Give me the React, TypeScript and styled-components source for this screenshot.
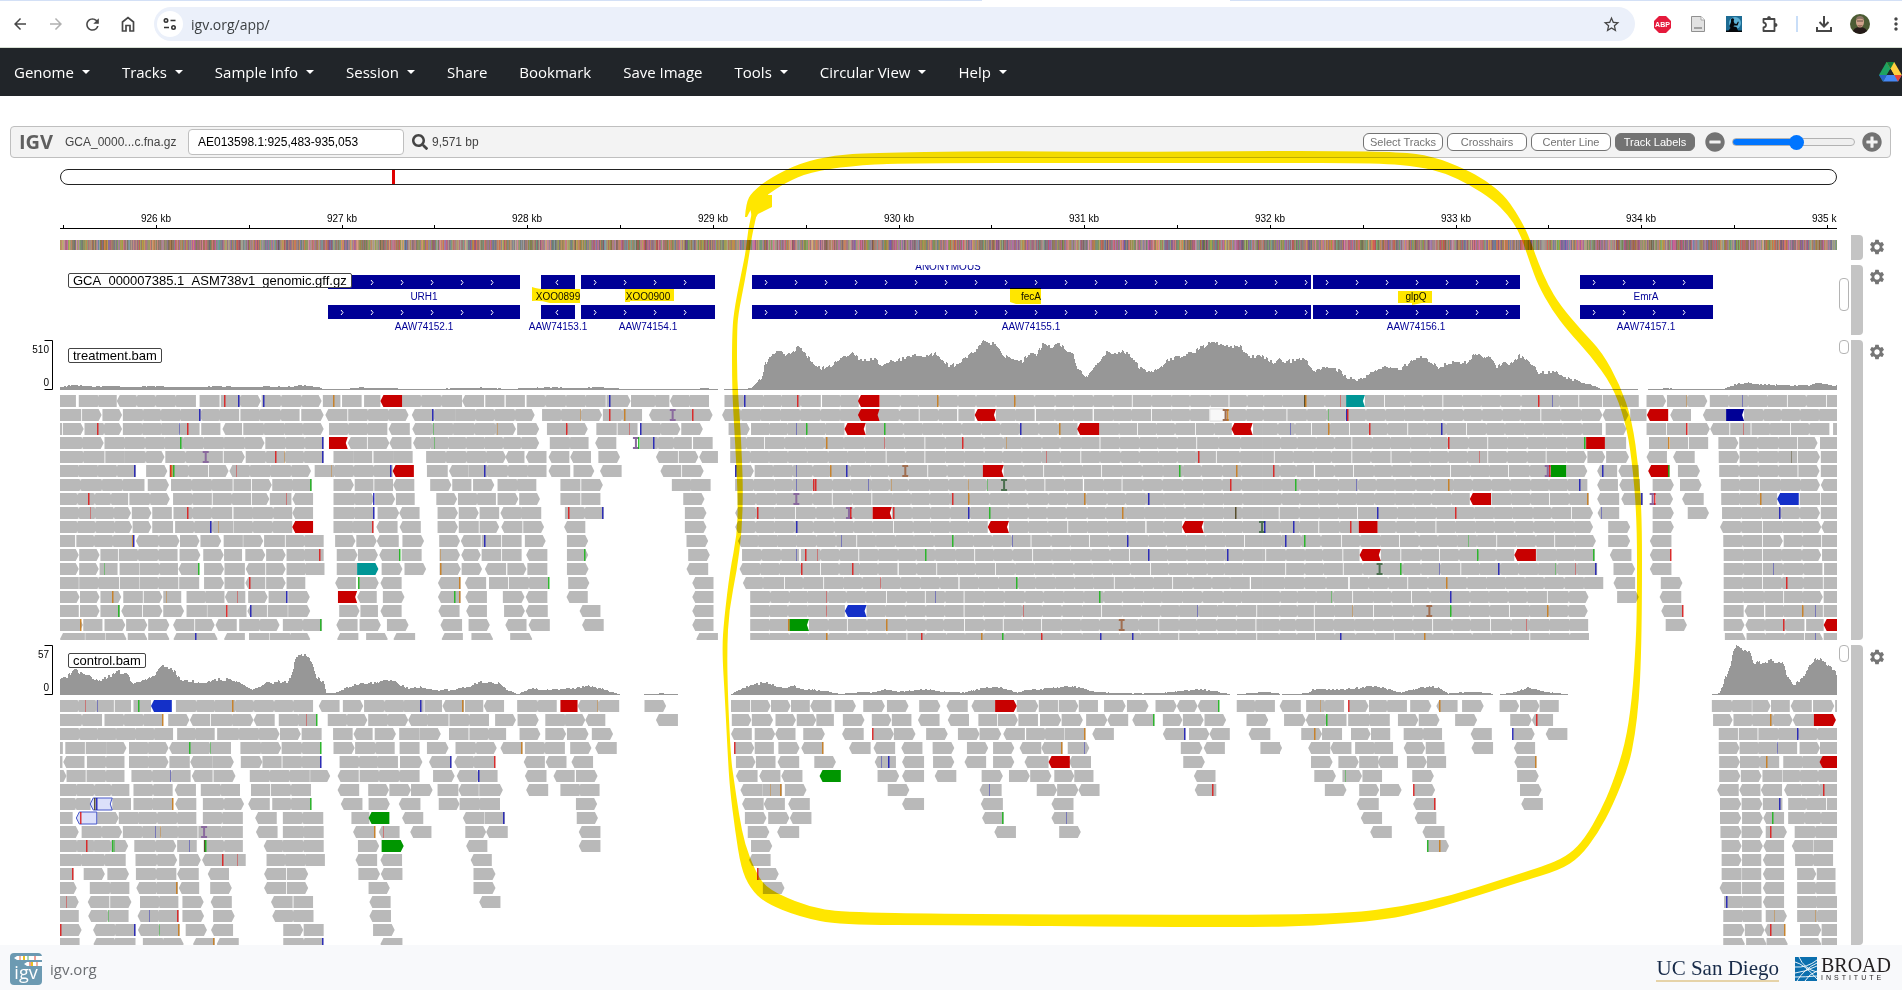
import React from 'react';
import styled, { createGlobalStyle } from 'styled-components';
import {
  MdArrowBack,
  MdArrowForward,
  MdMoreVert,
  MdRefresh,
  MdSettings,
  MdStarBorder,
} from 'react-icons/md';
import { FaMinusCircle, FaPlusCircle, FaSearch } from 'react-icons/fa';

/* ------------------------------------------------------------------ */
/* Alignment data                                                      */
/*                                                                     */
/* Each tile holds packed rows. A token is either a read run           */
/* ("<286-480", "541-639>", optional colour letter in front, ">" for a */
/* forward tip, "n" for a notched end) or a base mark ("r551", upper   */
/* case when low quality).                                             */
/* ------------------------------------------------------------------ */

const UNITS_PER_PX = 2.45;
const VIEW_LEFT = 60;

interface Tile {
  origin: number;
  rows: string[];
}

const treatmentTiles: Tile[] = [
  {
    origin: 0,
    rows: [
      '147-186 193-286 <286-480 489-538 541-639> 641-788> 791-834 838-886 892-932 985-1132 <1132-1186 1189-1236 1239-1286 1290-1484 1486-1545> 1546-1568 r<932-985 r551 b585 b648 o818 b1495',
      '147-199 201-249> 251-299> 301-586 589-734 738-793> <797-851 853-1001> <1009-1115 1115-1310> 1328-1475> 1477-1568 b489 b1060 O1423 r1494 o1532',
      '147-152 154-205> 207-299> 301-489 493-540 <545-593 596-793> 806-949 <952-1004 <1010-1264> 1267-1321> 1340-1440> 1461-1511 1513-1562 r240 r460 B442 r1389 O1220 G1064 R1544',
      '147-254> 256-648> 650-793 <852-899 901-954> <954-1008 <1012-1321> 1347-1442 <1458-1510 r806-852n g444 b791 G1065 i1558 g1566',
      '147-256 258-306 306-403> 405-546 548-600> 602-793 817-867 867-912 915-963 963-1011 1044-1240> <1238-1285 <1288-1339 <1344-1395 <1397-1448 1466-1519> i504 r677 O699 b791',
      '147-333 358-410> 415-510 512-560> <562-762> 771-962 1046-1097 <1100-1148 1148-1339 <1344-1397 1405-1456> <1470-1523 b331 r418 o422 g426 b959 b1189 r<962-1014 R580 O814',
      '147-354 362-414> 419-570 572-615 617-666> 667-764 817-867> 869-915 917-963 <963-1015 1054-1106> 1108-1155 1159-1211> 1219-1314 1373-1422 1424-1477> g763',
      '147-314 317-416> 424-519 521-615 617-660> 661-714 <716-767 817-917> 919-968> 970-1016 1069-1120> 1122-1215 1219-1270> 1272-1323> 1373-1422 1424-1471 r218 R702 b916',
      '147-321> 323-371> 373-421 425-569 572-716 <716-767 817-917 925-978> <978-1028 1072-1122> 1124-1173> 1175-1223 <1226-1326 1384-1479 r460 R223 b916 r1395 b1477',
      '147-324> 325-371> 373-424 429-571 572-716 817-915 <922-974 <979-1031 1072-1122> 1124-1173 1175-1223> <1228-1280 1282-1333> <1382-1434 b516 O536 r915 r<716-767',
      '147-184 187-324 <333-440> 441-489> 491-542> 548-595 596-645> 647-698 700-793 821-871> 873-923> <923-977 986-1039> 1076-1127> <1129-1178 1180-1228 1230-1278 1286-1337> 1389-1441> o325 b329 b1189',
      '147-193> 194-244> 246-289 291-435 440-491> 498-548> 549-593 601-650> 652-700> 702-793 825-876> 877-926> <929-980 984-1033 1077-1127> <1130-1178> 1180-1228 1230-1278 <1289-1341 1389-1441> r783 g979 O1080 g1434',
      '147-193> 194-242> 244-288 293-342 343-436 <437-488 500-549> 550-600 <602-650 652-700> 702-795 825-875 935-986> 991-1044> 1077-1129> 1131-1181> <1188-1240 1243-1290> 1292-1341 1389-1442> t875-927> G258 g487 o1080',
      '147-193 194-292 294-342 343-437 439-488 500-549> 550-599 <601-650 652-700> 702-748 <821-872 877-928> <932-984 <1073-1128 <1139-1191 1198-1245 1247-1344 1392-1444> r612 g880 o1126 g1344',
      '147-195> 196-244> 246-297> 302-350 352-398> 400-444 457-550 <551-601 608-656> 658-704 706-759> <875-923 938-991> <1073-1128 <1140-1193 1232-1285> <1288-1341 <1388-1440 r828-875n o277 O409 R583 b703 g1114 o1126',
      '147-193 196-244> 246-294 <297-348 350-398> 400-451> 457-507 508-555 557-604 <606-654 656-705 706-760> 831-881> 883-926 <932-984 <1074-1126 <1142-1193 1235-1286> <1288-1342 <1420-1471 g291 r557 b614',
      '147-203> 204-251 256-307> 309-361> 363-415> <424-476 478-526> <528-580 586-685> 693-789 <824-876 881-933> 948-1001> <1079-1132 1148-1200> <1238-1290 <1295-1347 <1426-1479 o199 g787',
      '<147-208 209-258 259-310> 313-361> 363-415> <425-478 478-533> <549-600 610-660 661-760> <826-878 897-950> <964-1017 <1082-1134 1155-1208> 1250-1304> b479',
    ],
  },
  {
    origin: 1568,
    rows: [
      '0-72 <73-169 207-443 446-536 588-1205 1207-1442 1444-1568 r<534-587 b257 r388 o729 o919',
      '0-5 <22-178> <201-683 685-777 780-820 872-967 970-1109 1112-1252 1254-1395 1442-1568 587-680 i80 r129 r<534-587n r<820-872n w1396-1432 q1435 o1440',
      '0-99> 101-154> 217-269> 272-501 553-1072 1125-1218 1220-1360 1362-1450 1502-1524 b2 B384 g410 g601 b933 o1028 r<501-553n r<1071-1125 r<1449-1501n',
      '0-127 130-178 221-304 306-697 699-1126 1128-1363 1365-1524 b35 o459 r792 R601 O899',
      '<39-93 95-143> <145-191 221-602 604-697 699-1079 1081-1411 1413-1524 r1369 R998',
      '<50-101 103-156> 233-279> 281-704 706-840 891-988 990-1130 1132-1524 r840-891n b234 B384 o469 b506 q650 g1322 o1463',
      '78-173 233-991 993-1085 1088-1180 1182-1524 r427 r431 B562 O618 O805 G853 j892 r1447 B384',
      '106-158> 239-470 472-567 569-1524 i383 r766 o805 o1090 b1247',
      '110-163> <233-380 382-570 617-1524 r290 i512 r517 r570-617n r623 b805 g858 o1184 k1461',
      '110-163> <233-620 622-852 904-1047 1049-1238 1241-1328 1381-1524 b384 r<852-904n r<1328-1381n j1524',
      '114-167> <240-530 532-957 959-1100 1102-1480 1482-1524 g766 b1195 B495 B915',
      '118-171> 250-390 394-535 537-819 821-961 963-1198 1200-1524 r406 R437 g700 b1248 b1440 B384',
      '<114-167 <244-441 443-631 634-726 728-870 872-1250 1252-1524 r396 r523',
      '<128-180 <252-353 355-449 451-780 783-1161 1163-1304 1306-1494 1497-1524 g924 R591',
      '<128-180 270-603 605-698 700-793 795-1524 g1127 R459 B726',
      '<128-180 270-502 555-793 795-1130 1132-1510 1512-1524 b<502-555n R459 B1366 R940',
      '<128-180 270-366 414-507 509-794 796-889 891-983 985-1270 1272-1508 1510-1524 g366-414n o364 o604 q1180',
      '<138-191 270-653 655-1319 1321-1510 1512-1524 o459 r691 o837 g890 r984 b1130 b1208',
    ],
  },
  {
    origin: 3092,
    rows: [
      '0-206 252-299 301-442 444-775 777-833 835-923 942-990> 992-1091> 1097-1286 1288-1382 1384-1409 k105 o108 R193 t206-252n r679 B714 B1178 O1042',
      '0-60 62-682 684-834> <834-898> 902-942 <1000-1051 <1080-1137 1181-1409 b208 r211 r<943-995 v1137-1181n G163',
      '0-120 122-213 215-356 358-500 502-833 842-893> 942-990 992-1042 1044-1097> <1098-1145 1147-1197 1199-1294 1296-1390 1399-1409 B72 o165 r264 b440 r1042 R1180',
      '0-219 221-552 554-794 840-892 948-996 999-1044 1046-1093 1118-1167> 1169-1311 1313-1361> 1367-1409 r794-840 r457 g791 o997',
      '0-29 31-219 221-315 317-552 554-695 697-796> 797-841> 843-899> <942-992 <1007-1060 1119-1170> 1170-1311 1313-1367> 1369-1409 K1299 R533',
      '0-127 130-223 225-461 463-603 605-708 745-797> <821-870 <873-923 1019-1073> 1120-1312 1314-1366> 1369-1409 r30 i700 r706 g708-745 b836 r<946-998 g998',
      '0-797 <821-872 <875-926 957-1009> 1024-1077> 1124-1218 1220-1367> <1369-1409 g82 B232 o458 b779',
      '0-509 562-703 705-800 <821-875 <880-933 965-1007> <1029-1082 1125-1262 1317-1367 1369-1409 r<509-561 o799 b932 i957 r963 o1222 b<1262-1315',
      '0-41 43-233 235-757 759-811> <822-875 957-1009> 1043-1095> 1127-1367> 1369-1409 b284 r475 B833 b1270',
      '0-138 140-237 283-425 427-811> 848-902> 957-1009> <1122-1225 1227-1370> <1370-1409 r237-283 b8 b79 r218',
      '0-194 196-336 338-574 576-716 718-818> 848-902> <950-1003 1130-1225 1227-1276> 1278-1370 1372-1409 b58 g105 G507',
      '0-8 10-197 199-239 291-339 341-434 436-618 672-815 <852-905 <950-1002 1131-1225 1227-1370> 1372-1409 r<239-291n g529 r<618-671 g813 r1001',
      '0-57 59-198 200-486 488-821 861-914> <950-1003 1131-1225 1227-1373 1377-1409 j288 g340 B436 b580 G721 R770 b819 B1254',
      '0-211 215-356 358-836 <861-914 977-1030> 1131-1225 1227-1374 1376-1409 o453 r1286',
      '0-221 223-365 367-698 700-800> 870-923> <974-1027 1131-1277 1279-1374> 1376-1409 G172 b463',
      '0-127 129-272 274-605 607-798> <978-1031 1131-1180 <1182-1230 1233-1374 1376-1409 q410 g463 o700 O223 r1031 o1326 B1358',
      '0-127 129-417 419-559 561-799 989-1041> 1131-1182> <1184-1329 1333-1376 R650 r1280 r<1376-1409',
      '0-130 132-323 325-655 657-801 1134-1185> 1187-1328 1330-1374> 1376-1409 b193 o400 B1358',
    ],
  },
];

const controlTiles: Tile[] = [
  {
    origin: 0,
    rows: [
      '147-279 281-321 327-370 431-767 <781-832 840-890> 892-1038 1040-1083 <1084-1137 1139-1184 <1185-1235 1267-1364 <1415-1517 R210 B241 g341 o572 b1032 o1134 b<370-421 r1373-1415 O1466',
      '147-250 256-399 412-464> <465-515 517-621> <621-673 683-776 803-900> 902-1000> <1000-1099 1101-1198 1213-1264> 1268-1320> 1336-1434> <1434-1483 o399 R753 g777',
      '147-424 434-526 532-685> 686-737> 739-788 816-864 <866-913 918-970> 978-1028 1028-1080> 1100-1148 1150-1240 1273-1324> 1336-1387> 1389-1442> 1450-1502>',
      '147-154 160-208 210-260 260-310> 316-413> <414-566 589-689> 690-787 817-869> 870-967 979-1028 1046-1099> 1116-1217> <1226-1280 1286-1384 1397-1449> <1458-1511 g465 G518 g787 o1280',
      '147-153 <155-207 213-305 316-413> 415-465 <466-520 520-573> 590-643> 643-690 692-787 832-975 980-1035> <1051-1106 <1113-1213 <1283-1335 <1337-1388 <1400-1453 b787 b1105 r1213',
      '147-163> 163-210 212-305 322-467 <470-521 523-577> 612-759 760-809> <827-879 881-1028 1061-1114> <1119-1219 <1286-1339 <1356-1408 1411-1464> B419 b1173',
      '147-317 327-423 <428-480 492-588 615-662 664-762 <827-880 902-953> 954-1007> 1007-1060> 1072-1123 <1123-1173 1174-1232> <1289-1343 1373-1469',
      '147-222 275-321 327-424 <429-481 497-598> <608-661 667-763 <835-888 903-955> <977-1030 1075-1126> 1126-1225 1411-1463> o423 g762 l<221-275n k233 b238',
      '147-178 238-291> 291-481 497-595 <625-678 693-792 861-905 <985-1037 <1134-1186 1187-1237 1413-1465> b1236 l<187-237 r199 g<903-954',
      '147-193> 200-299> 301-484 486-595 <627-680 693-793 <865-919 <928-979 <1005-1057 1140-1191> <1191-1244 <1418-1471 B381 O395 i500 o918 R941',
      '147-314> 329-432> 434-482 499-595 <646-793 877-929> <1142-1194 <1418-1471 r214 g277 G282 B466 k502 g505 g935-989>',
      '147-308 332-434> 439-492> <495-549 549-602 653-796 <871-924 <932-985 <1153-1205 r547 R583',
      '147-180 205-257> 263-316> 333-432 <434-487 <509-561 <647-701 703-755> 878-931> <933-986 1160-1214> r180',
      '147-188> 220-317 <334-436 <438-488 515-568> <647-701 703-755> 903-955> 1160-1214> o434',
      '147-193> <215-268 270-322> 343-437 447-499> <516-568 <664-717 719-767 <905-957 <1174-1226 R165',
      '147-193 <216-315 <337-438 447-500> 522-575> <667-768 <905-958 G268 B368 r437',
      '147-200> <228-332 <338-440 455-507> <517-571 694-743> 744-793 914-967> r149 b330 o438 G391',
      '147-195 <229-332 350-450> <473-526 <531-585 694-792 <932-986 o525 b791',
    ],
  },
  {
    origin: 1568,
    rows: [
      '11-64> 223-270 272-320> 321-369> 370-416 <417-469 477-529> 547-600> 605-658> 684-736> <751-803 <812-870 923-976> 977-1024 1026-1074> 1075-1122 1137-1190> 1193-1246> 1263-1315> <1315-1366> <1366-1418 1462-1555 r870-923> g1418',
      '<39-93 225-273> 274-326> 332-382> 384-432> 432-475 497-550> 568-616> 617-665 <681-734 <754-806 829-875 877-926> 927-975 980-1032> 1033-1085> 1093-1145> <1145-1196 <1206-1260 1281-1329> 1330-1381> 1383-1436> 1486-1538> g1260',
      '<223-274 281-331> <331-381 400-453> <495-548 570-622> 622-675> 701-754> 779-832> 832-885> <890-943 946-1040 1041-1091 <1108-1161 <1281-1336 1345-1395> <1395-1445 <1491-1544 r572 o1090 b1335',
      '231-280> 281-328 339-391> <395-449 <512-565 <572-625 <640-692 717-770> 801-853> 865-917> <930-983 <983-1035 1048-1101> 1325-1378> <1381-1433 1520-1568 r233 o448 o1034 B1090',
      '235-283> 284-332 <337-390 427-480> <575-627 <642-696 718-770> <795-848 865-917> <942-1001 <1051-1105 1331-1384> B594 b609 r<1001-1053',
      '<235-288 <292-344 <346-398 582-635> <642-696 <722-775 837-889> 904-955> 956-1008> 1015-1064> 1064-1111 <1357-1410 g<440-492',
      '<246-300 300-348 355-408> 607-660> <832-886 972-1022> 1022-1074> <1074-1126 <1359-1412 O320 o346 B858 r1405',
      '<250-303 <303-355 <363-416 <642-696 <835-889 <1008-1062',
      '257-310> 314-366> <367-420 <838-891 <1008-1062 g890 B1046',
      '264-317> <336-390 <868-921 1027-1080>',
      '272-324>',
      '<267-320',
      '287-340> r288',
      '301-354>',
    ],
  },
  {
    origin: 3092,
    rows: [
      '0-31 <43-95 108-201 213-261> 262-355 363-415> <427-479 490-543> 582-630> 632-680> 680-727 1102-1200 1201-1246> 1247-1293 <1295-1347 1350-1402> 1404-1409 O145 r214 o435',
      '0-15> 54-107> <107-207 211-313 333-383> 384-435> 473-527> 608-661> <661-713 1105-1153> 1155-1300> <1300-1352 g158 r673 o1247 r1352-1406>',
      '0-20 96-147> 147-196 218-266> 267-314 347-441 <511-563 615-668> <695-748 1119-1166 1168-1214 1216-1409 o129 b616 b1312',
      '0-49> <113-167 <167-219 228-321 <347-400> 401-447 <513-566 <617-669 1119-1170> 1170-1311 1317-1367> 1367-1409 B1263',
      '120-173> 187-237> 238-285 <283-333 355-404> 404-451 <618-672 1120-1171> 1171-1267 1277-1372 o672 o1236 r<1366-1409',
      '128-181> 197-245> 246-294 368-421> 625-678> 1120-1172> 1173-1224> 1226-1275 1276-1409 G205',
      '154-207> 238-287> 289-342> 372-424> 632-685> <1115-1168 <1169-1221 <1222-1274 <1279-1409 r373 r1378',
      '<232-286 <370-425 <635-688 1122-1174> 1175-1226> 1227-1275 1289-1382 1384-1409 r423 b1268',
      '<242-294 <374-427 1122-1174> 1176-1227> <1228-1279 1289-1409 g1253',
      '<265-318 <393-447 1123-1175> 1175-1227> 1234-1286> 1305-1409 r1246',
      '404-458> 1126-1175> 1176-1227> <1228-1279 <1298-1351 1352-1399 g406 o436',
      '1126-1175> 1176-1223 <1227-1279 1306-1399',
      '1126-1175 1176-1223 <1227-1279 1311-1358> 1359-1405',
      '<1121-1174 1176-1223 <1227-1279 1311-1405',
      '1132-1224 <1227-1279 1311-1409 b1138',
      '1130-1224 1234-1286> 1311-1409 O1256 O1358',
      '1130-1182> 1183-1231> <1231-1281 1318-1370> 1371-1409 r1246 o1281',
      '1130-1183> 1186-1236> 1236-1288> 1318-1370> 1371-1409',
    ],
  },
];

/* Coverage islands as "position,depth" pairs; depth is a third of a pixel. */
interface Island {
  origin: number;
  points: string;
}

const treatmentCoverage: Island[] = [
  {
    origin: 0,
    points:
      '147,8 175,15 225,10 270,12 310,9 370,12 430,9 500,10 540,12 590,8 650,11 700,9 740,14 770,11 795,2 850,4 880,8 960,5 1010,3 1060,2 1120,6 1190,7 1240,3 1360,9 1400,5 1460,9 1500,5 1568,2 1678,3 1728,5 1758,2',
  },
  {
    origin: 1568,
    points:
      '207,3 240,2 270,5 285,20 298,40 305,75 320,105 345,118 355,98 370,112 385,128 400,118 410,100 430,72 445,64 470,72 490,95 517,112 530,98 555,90 575,92 590,72 610,85 640,92 665,102 700,105 725,108 755,72 780,78 800,100 825,120 840,147 870,135 890,105 910,88 935,85 950,108 970,108 985,135 1010,130 1025,142 1045,120 1060,110 1070,70 1095,37 1115,70 1140,112 1160,108 1180,118 1200,105 1220,72 1240,52 1270,60 1290,92 1320,100 1360,118 1400,144 1430,132 1470,130 1490,100 1520,102 1555,80 1568,92 1580,84 1602,90 1624,95 1644,70 1654,58 1674,68 1714,60 1724,42 1754,30 1784,45 1814,67 1864,65 1894,92 1914,100 1934,85 1954,67 1984,82 2024,82 2046,112 2069,98 2079,98 2099,68 2114,80 2129,75 2154,104 2184,80 2199,52 2244,52 2274,35 2304,25 2354,4 2369,2 2444,4',
  },
  {
    origin: 3092,
    points: '945,2 990,5 1040,3 1130,3 1160,18 1190,22 1220,17 1280,14 1340,14 1360,20 1409,12',
  },
];

const controlCoverage: Island[] = [
  {
    origin: 0,
    points:
      '147,47 170,60 178,77 195,65 220,53 240,43 270,57 285,70 310,63 325,35 350,45 385,67 395,87 420,80 440,47 480,40 495,35 520,45 560,47 590,33 615,15 650,35 680,40 705,37 716,75 725,112 738,120 750,123 765,95 775,50 793,40 798,5 820,7 850,23 880,33 920,37 945,47 970,37 1000,20 1030,23 1060,15 1110,15 1150,27 1170,37 1220,35 1240,17 1268,2 1300,20 1330,15 1400,20 1440,28 1470,20 1518,1',
  },
  { origin: 1568, points: '11,2 50,5 94,2' },
  {
    origin: 1568,
    points:
      '223,2 245,17 270,30 305,37 330,27 350,22 375,27 400,17 450,13 490,3 550,10 570,7 600,17 630,10 670,13 700,17 740,10 790,7 820,15 850,23 885,23 925,7 940,13 1000,20 1050,27 1080,20 1110,10 1180,5 1270,5 1330,13 1370,17 1400,13 1445,2',
  },
  { origin: 1568, points: '1462,2 1530,10 1568,4' },
  {
    origin: 3092,
    points:
      '50,2 110,5 125,17 200,17 280,27 340,7 380,20 410,28 440,17 455,5 520,10 567,3',
  },
  { origin: 3092, points: '583,2 615,7 650,22 690,10 750,2' },
  {
    origin: 3092,
    points:
      '1102,3 1120,5 1135,55 1145,85 1157,147 1175,137 1195,125 1205,93 1240,103 1275,95 1285,55 1300,30 1320,45 1340,90 1360,110 1380,97 1400,75 1409,55',
  },
];

const markColors: Record<string, string> = {
  r: '#dc1414',
  b: '#1414b4',
  g: '#14b414',
  o: '#c87814',
  k: '#463c14',
};
const insertColors: Record<string, string> = { i: '#8a6a9e', j: '#4c7050', q: '#a06e50' };
const readColors: Record<string, string> = {
  r: '#c80000',
  g: '#009600',
  b: '#1430c8',
  v: '#000096',
  t: '#009696',
  w: '#f8f8f8',
  l: '#dce0fa',
};
const readOutlines: Record<string, string> = { l: '#4656c8', w: '#dcdcdc' };

const noise = (n: number) => {
  const s = Math.sin(n * 127.1 + 11.7) * 43758.5453;
  return s - Math.floor(s);
};

const toPx = (origin: number, unit: number) => (origin + unit) / UNITS_PER_PX - VIEW_LEFT;

/* ------------------------------------------------------------------ */
/* Styles                                                              */
/* ------------------------------------------------------------------ */

const GlobalStyle = createGlobalStyle`
  *, *::before, *::after { box-sizing: border-box; }
  body { margin: 0; background: #fff; }
  button, input { font: inherit; color: inherit; margin: 0; }
`;

const sans = '"Liberation Sans", Arial, sans-serif';
const ui = '"Open Sans", "Segoe UI", sans-serif';

const Page = styled.div`
  position: relative;
  display: flex;
  flex-direction: column;
  min-height: 100vh;
  overflow: hidden;
  font-family: ${sans};
  font-size: 12px;
  color: #000;
`;

const TabStrip = styled.div`
  display: flex;
  height: 1px;
  background: #d3e0f6;
  justify-content: center;
`;

const ActiveTabEdge = styled.div`
  width: 13%;
  margin-left: 310px;
  background: #fff;
`;

const BrowserBar = styled.header`
  display: flex;
  align-items: center;
  height: 47px;
  padding-left: 2px;
  border-bottom: 1px solid #d8e0d4;
  font-family: ${ui};
  color: #474747;
`;

const IconButton = styled.button<{ $muted?: boolean }>`
  display: flex;
  flex: none;
  align-items: center;
  justify-content: center;
  width: 36px;
  height: 36px;
  padding: 0;
  border: 0;
  background: none;
  color: ${(p) => (p.$muted ? '#b0b0b0' : '#474747')};
`;

const AddressPill = styled.div`
  display: flex;
  flex: 1;
  align-items: center;
  height: 34px;
  margin: 0 9px 0 8px;
  padding: 0 6px 0 3px;
  border-radius: 17px;
  background: #ebf0fa;
`;

const SiteInfo = styled.button`
  display: flex;
  align-items: center;
  justify-content: center;
  width: 26px;
  height: 26px;
  padding: 0;
  border: 0;
  border-radius: 50%;
  background: #fff;
`;

const AddressInput = styled.input`
  flex: 1;
  min-width: 0;
  padding: 0 8px;
  border: 0;
  outline: 0;
  background: none;
  font-size: 14px;
  color: #3c4043;
`;

const Extensions = styled.div`
  display: flex;
  flex: none;
  align-items: center;
  width: 258px;
  overflow: hidden;
`;

const Divider = styled.span`
  flex: none;
  width: 2px;
  height: 16px;
  margin: 0 8px;
  background: #c9def8;
`;

const NavBar = styled.nav`
  display: flex;
  align-items: center;
  gap: 32px;
  height: 48px;
  padding-left: 14px;
  background: #212529;
  font-family: ${ui};
`;

const NavItem = styled.button<{ $menu?: boolean }>`
  display: flex;
  align-items: center;
  gap: 8px;
  padding: 0;
  border: 0;
  background: none;
  color: #fff;
  font-size: 15px;
  line-height: 24px;
  white-space: nowrap;

  &::after {
    display: ${(p) => (p.$menu ? 'block' : 'none')};
    content: '';
    border: 4px solid transparent;
    border-top-color: #fff;
    border-bottom: 0;
  }
`;

const DriveLink = styled.a`
  display: flex;
  margin-left: auto;
`;

const Browser = styled.main`
  flex: 1;
  padding-top: 30px;
`;

const Toolbar = styled.div`
  display: flex;
  align-items: center;
  height: 32px;
  margin: 0 11px 11px 10px;
  padding: 0 8px;
  border: 1px solid #bfbfbf;
  border-radius: 4px;
  background: #f3f3f3;
  color: #444;
`;

const Wordmark = styled.span`
  width: 46px;
  font-family: ${ui};
  font-size: 20px;
  font-weight: 700;
  line-height: 20px;
  color: #5f5f5f;
`;

const GenomeName = styled.span`
  width: 123px;
`;

const LocusInput = styled.input`
  width: 216px;
  height: 26px;
  padding: 0 9px;
  border: 1px solid #bfbfbf;
  border-radius: 4px;
  background: #fff;
  color: #000;
`;

const SearchButton = styled.button`
  display: flex;
  margin: 0 4px 0 8px;
  padding: 0;
  border: 0;
  background: none;
  color: #444;
`;

const ToolbarRight = styled.div`
  display: flex;
  align-items: center;
  gap: 4px;
  margin-left: auto;
`;

const Toggle = styled.button<{ $on?: boolean }>`
  width: 80px;
  height: 18px;
  padding: 0;
  border: 1px solid #737373;
  border-radius: 6px;
  background: ${(p) => (p.$on ? '#737373' : '#fff')};
  color: ${(p) => (p.$on ? '#fff' : '#737373')};
  font-size: 11px;
  line-height: 16px;
  text-align: center;
`;

const Zoom = styled.div`
  display: flex;
  align-items: center;
  gap: 7px;
  margin-left: 6px;
`;

const ZoomButton = styled.button`
  display: flex;
  padding: 0;
  border: 0;
  background: none;
  color: #737373;
`;

const ZoomSlider = styled.input`
  appearance: none;
  width: 123px;
  height: 8px;
  border: 1px solid #b2b2b2;
  border-radius: 4px;
  outline: 0;
  background: linear-gradient(to right, #0075ff 53%, #efefef 53%);

  &::-webkit-slider-thumb {
    appearance: none;
    width: 15px;
    height: 15px;
    border-radius: 50%;
    background: #0075ff;
  }
`;

const Row = styled.section<{ $h: number; $gap?: number }>`
  display: grid;
  grid-template-columns: 60px minmax(0, 1fr) 14px 12px 39px;
  height: ${(p) => p.$h}px;
  margin-bottom: ${(p) => p.$gap ?? 0}px;
`;

const Viewport = styled.div`
  position: relative;
  overflow: hidden;
`;

const Canvas = styled.svg`
  display: block;
  width: 100%;
  height: 100%;
`;

const Ideogram = styled.div`
  height: 16px;
  border: 1px solid #222;
  border-radius: 8px;
`;

const IdeogramMark = styled.div`
  width: 3px;
  height: 100%;
  margin-left: 331px;
  background: #e00000;
`;

const TrackLabel = styled.div`
  position: absolute;
  top: 8px;
  left: 8px;
  height: 15px;
  padding: 0 4px;
  overflow: hidden;
  border: 1px solid #444;
  border-radius: 2px;
  background: #fff;
  font-size: 13px;
  line-height: 13px;
`;

const ScrollThumb = styled.div<{ $h: number; $top: number }>`
  width: 10px;
  height: ${(p) => p.$h}px;
  margin: ${(p) => p.$top}px 2px 0;
  border: 1px solid #b4b4b4;
  border-radius: 4px;
`;

const DragHandle = styled.div`
  border-radius: 0 4px 4px 0;
  background: #c4c4c4;
`;

const GearButton = styled.button`
  align-self: start;
  display: flex;
  padding: 3px 0 0 5px;
  border: 0;
  background: none;
  color: #757575;
`;

const Footer = styled.footer`
  display: flex;
  align-items: center;
  height: 45px;
  padding: 3px 11px 0 10px;
  background: #f8f9fb;
`;

const FooterLink = styled.a`
  display: flex;
  align-items: center;
  gap: 8px;
  color: #6c6f73;
  font-family: ${ui};
  font-size: 15px;
  text-decoration: none;
`;

const Sponsors = styled.div`
  display: flex;
  align-items: center;
  gap: 16px;
  margin-left: auto;
`;

const UcsdLogo = styled.a`
  border-bottom: 2px solid #e6d3a8;
  color: #182b49;
  font-family: "Liberation Serif", serif;
  font-size: 21px;
  line-height: 24px;
  text-decoration: none;
`;

const BroadLogo = styled.a`
  display: flex;
  align-items: center;
  gap: 4px;
  color: #231f20;
  text-decoration: none;
`;

const BroadWords = styled.span`
  display: flex;
  flex-direction: column;
  font-family: "Liberation Serif", serif;
  font-size: 20px;
  line-height: 16px;
`;

const BroadSub = styled.span`
  font-family: ${sans};
  font-size: 7px;
  line-height: 9px;
  letter-spacing: 3px;
`;

const Highlighter = styled.svg`
  position: absolute;
  inset: 0;
  width: 100%;
  height: 100%;
  pointer-events: none;
  mix-blend-mode: multiply;
`;

/* ------------------------------------------------------------------ */
/* Track drawing                                                       */
/* ------------------------------------------------------------------ */

const ROW_PITCH = 14;
const READ_H = 12;

function readShape(x0: number, x1: number, y: number, left: boolean, right: string) {
  const mid = y + READ_H / 2;
  const bottom = y + READ_H;
  const l = left ? `${x0 + 3},${bottom} ${x0},${mid} ${x0 + 3},${y}` : `${x0},${bottom} ${x0},${y}`;
  let r = `${x1},${y} ${x1},${bottom}`;
  if (right === '>') r = `${x1 - 3},${y} ${x1},${mid} ${x1 - 3},${bottom}`;
  if (right === 'n') r = `${x1},${y} ${x1 - 2},${mid} ${x1},${bottom}`;
  return `${l} ${r}`;
}

function Alignments({ tiles, top }: { tiles: Tile[]; top: number }) {
  const reads: React.ReactNode[] = [];
  const marks: React.ReactNode[] = [];
  let notches = '';
  tiles.forEach((tile, t) =>
    tile.rows.forEach((row, r) => {
      const y = top + r * ROW_PITCH;
      row.split(' ').forEach((token, k) => {
        const key = `${t}-${r}-${k}`;
        const run = /^([a-z]?)(<?)(\d+)-(\d+)([>n]?)$/.exec(token);
        if (run) {
          const x0 = toPx(tile.origin, Number(run[3]));
          const x1 = toPx(tile.origin, Number(run[4]));
          const color = run[1];
          const shape = (
            <polygon
              key={key}
              points={readShape(x0, x1, y, run[2] === '<', run[5])}
              fill={color ? readColors[color] : '#b9b9b9'}
              stroke={readOutlines[color] ?? 'none'}
            />
          );
          (color ? marks : reads).push(shape);
          if (!color) {
            const count = Math.round((x1 - x0) / 19.4);
            for (let i = 1; i < count; i += 1) {
              const nx = x0 + ((x1 - x0) * i) / count + noise(i + r * 7 + x0) * 2 - 1;
              const d = 0.5 + noise(nx + r) * 0.8;
              notches += `M${nx - d} ${y}h${d * 2}l${-d} 2zM${nx - d} ${y + READ_H}h${d * 2}l${-d} -2z`;
            }
          }
          return;
        }
        const code = token[0];
        const x = toPx(tile.origin, Number(token.slice(1)));
        if (insertColors[code]) {
          marks.push(
            <path
              key={key}
              d={`M${x - 3} ${y}h6v2h-2v8h2v2h-6v-2h2v-8h-2z`}
              fill={insertColors[code]}
            />,
          );
          return;
        }
        const low = code === code.toUpperCase();
        marks.push(
          <rect
            key={key}
            x={Math.round(x) - 1}
            y={y}
            width={low ? 1 : 1.5}
            height={READ_H}
            fill={markColors[code.toLowerCase()]}
            opacity={low ? 0.4 : 0.85}
          />,
        );
      });
    }),
  );
  return (
    <g>
      {reads}
      <path d={notches} fill="#e0e0e0" />
      {marks}
    </g>
  );
}

function Coverage({ islands, base }: { islands: Island[]; base: number }) {
  const paths = islands.map((island, n) => {
    const pts = island.points.split(' ').map((p) => {
      const [u, d] = p.split(',').map(Number);
      return [toPx(island.origin, u), d / 3];
    });
    const start = Math.round(pts[0][0]);
    const end = Math.round(pts[pts.length - 1][0]);
    let d = `M${start} ${base}`;
    let s = 0;
    for (let x = start; x < end; x += 1) {
      while (s < pts.length - 2 && pts[s + 1][0] <= x) s += 1;
      const [xa, ya] = pts[s];
      const [xb, yb] = pts[s + 1];
      const f = Math.max(0, Math.min(1, (x - xa) / (xb - xa)));
      const depth = ya + (yb - ya) * f;
      const wobble = (noise(Math.floor(x / 2) + n * 31) - 0.5) * Math.min(4, depth * 0.25);
      d += `V${base - Math.max(1, Math.round(depth + wobble))}h1`;
    }
    return <path key={n} d={`${d}V${base}z`} fill="#979797" />;
  });
  return <g shapeRendering="crispEdges">{paths}</g>;
}

const Axis = ({ max }: { max: number }) => (
  <Canvas fontFamily={sans} fontSize="10">
    <path d="M44.5 .5H52.5V49.5H44.5" fill="none" stroke="#000" />
    <text x="49" y="13" textAnchor="end">
      {max}
    </text>
    <text x="49" y="46" textAnchor="end">
      0
    </text>
  </Canvas>
);

function Ruler() {
  const ticks = [];
  for (let i = 0; i <= 19; i += 1) {
    const x = Math.round(3 + i * 92.84);
    const kb = 925.5 + i * 0.5;
    ticks.push(
      <g key={i}>
        <path d={`M${x + 0.5} 40v4`} stroke="#000" />
        {Number.isInteger(kb) && (
          <text x={x} y="37" textAnchor="middle">
            {kb} kb
          </text>
        )}
      </g>,
    );
  }
  return (
    <Canvas fontFamily={sans} fontSize="10">
      {ticks}
      <path d="M0 43.5H1777" stroke="#000" />
    </Canvas>
  );
}

const channel = (i: number, seed: number, mean: number, spread: number) => {
  const fine = noise(i * 3 + seed) - 0.5;
  const coarse = noise(Math.floor(i / 4) * 5 + seed * 2) - 0.5;
  return Math.round(mean + (fine + coarse * 0.8) * spread);
};

const SequenceStrip = () => (
  <Canvas shapeRendering="crispEdges">
    {Array.from({ length: 1777 }, (_, i) => (
      <rect
        key={i}
        x={i}
        y="5"
        width="1"
        height="10"
        fill={`rgb(${channel(i, 1, 158, 70)},${channel(i, 2, 128, 52)},${channel(i, 3, 118, 66)})`}
      />
    ))}
  </Canvas>
);

interface Gene {
  start: number;
  end: number;
  name: string;
  id: string;
  reverse?: boolean;
}

const genes: Gene[] = [
  { start: 268, end: 460, name: 'URH1', id: 'AAW74152.1' },
  { start: 481, end: 515, name: 'XOO0899', id: 'AAW74153.1', reverse: true },
  { start: 521, end: 655, name: 'XOO0900', id: 'AAW74154.1' },
  { start: 692, end: 1251, name: 'fecA', id: 'AAW74155.1' },
  { start: 1253, end: 1460, name: 'glpQ', id: 'AAW74156.1' },
  { start: 1520, end: 1653, name: 'EmrA', id: 'AAW74157.1' },
];

function GeneTrack() {
  return (
    <Canvas fontFamily={sans} fontSize="10" fill="#000096">
      <text x="888" y="5" textAnchor="middle">
        ANONYMOUS
      </text>
      {genes.map((gene) => {
        const arrows: number[] = [];
        for (let x = gene.start + (gene.reverse ? 16 : 14); x < gene.end - 3; x += 30) arrows.push(x);
        const isMarked = /XOO|fecA|glpQ/.test(gene.name);
        const center = Math.floor((gene.start + gene.end) / 2);
        return (
          <g key={gene.id}>
            {[10, 40].map((y) => (
              <g key={y}>
                <rect x={gene.start} y={y} width={gene.end - gene.start} height="14" />
                {arrows.map((x) => (
                  <path
                    key={x}
                    d={gene.reverse ? `M${x + 1} ${y + 5}l-2 2.500l2 2.500` : `M${x - 1} ${y + 5}l2 2.500l-2 2.500`}
                    fill="none"
                    stroke="#fff"
                  />
                ))}
              </g>
            ))}
            <text x={center} y="35" textAnchor="middle" fill={isMarked ? '#101030' : '#000096'}>
              {gene.name}
            </text>
            <text x={center} y="65" textAnchor="middle">
              {gene.id}
            </text>
          </g>
        );
      })}
    </Canvas>
  );
}

interface TrackProps {
  height: number;
  gap?: number;
  label?: string;
  max?: number;
  thumb?: [number, number];
  children: React.ReactNode;
}

const Track = ({ height, gap, label, max, thumb, children }: TrackProps) => (
  <Row $h={height} $gap={gap}>
    <div>{max !== undefined && <Axis max={max} />}</div>
    <Viewport>
      {children}
      {label && <TrackLabel>{label}</TrackLabel>}
    </Viewport>
    <div>{thumb && <ScrollThumb $top={thumb[0]} $h={thumb[1]} />}</div>
    <DragHandle />
    <GearButton aria-label="Track settings">
      <MdSettings size={18} />
    </GearButton>
  </Row>
);

/* ------------------------------------------------------------------ */
/* Highlighter stroke                                                  */
/* ------------------------------------------------------------------ */

const outerEdge =
  '745,217 746,203 752,192 770,178 800,163 835,155 870,153 980,151 1120,152 1262,151 1335,151 1400,152 1432,156 1465,169 1485,180 1504,195 1516,212 1525,228 1531,242 1538,262 1548,285 1560,305 1582,331 1602,352 1620,385 1632,420 1639,470 1642,520 1642,600 1641,660 1639,700 1635,735 1629,765 1613,805 1598,833 1580,857 1560,870 1520,882 1480,895 1430,910 1385,920 1310,926 1262,927 1150,927 950,925 840,925 800,917 765,903 750,888 741,868 735,830 730,790 728,760 725,700 722,650 724,620 730,570 737,535 738,500 735,440 732,390 732,330 735,305 742,270 746,250 748,230 753,208';
const innerEdge =
  '757,213 752,235 750,250 745,280 738,315 737,335 737,380 740,420 742,460 743,490 742,530 737,570 729,610 727,650 728,700 731,760 734,780 739,815 745,845 755,870 764,885 780,895 810,907 840,912 950,914 1262,915 1350,913 1400,907 1450,896 1500,880 1550,864 1570,854 1585,838 1600,812 1612,785 1625,745 1632,700 1636,640 1637,600 1637,520 1632,460 1625,420 1612,385 1590,355 1568,331 1552,310 1538,285 1530,263 1524,245 1518,230 1508,215 1493,200 1470,185 1445,173 1420,167 1380,163 1262,163 1100,163 900,163 850,166 810,172 785,183 767,195 752,207 747,217';

function smooth(points: string) {
  const p = points.split(' ').map((s) => s.split(',').map(Number));
  let d = `L${p[0].join(' ')}`;
  for (let i = 1; i < p.length - 1; i += 1) {
    const mx = (p[i][0] + p[i + 1][0]) / 2;
    const my = (p[i][1] + p[i + 1][1]) / 2;
    d += `Q${p[i].join(' ')} ${mx} ${my}`;
  }
  return `${d}L${p[p.length - 1].join(' ')}`;
}

const strokePath = `M745 217${smooth(outerEdge)}L772 195L771 206${smooth(innerEdge)}z`;

const Marker = () => (
  <Highlighter fill="#ffe600" aria-hidden="true">
    <path d={strokePath} />
    <path d="M750 208L756 194L767 190L768 195H772V207L758 214L753 222Z" />
    <path d="M532 287Q540 290 556 289H580V303H550Q540 300 532 301Z" />
    <path d="M625 289H674V301H630V302H625Z" />
    <path d="M1010 288H1041V304H1016L1010 302Z" />
    <path d="M1398 291H1432V303H1422L1412 305V303H1398Z" />
  </Highlighter>
);

/* ------------------------------------------------------------------ */
/* Small drawings                                                      */
/* ------------------------------------------------------------------ */

const HomeIcon = () => (
  <svg width="16" height="18" viewBox="0 0 16 18" fill="none" stroke="currentColor" strokeWidth="1.700">
    <path d="M2.500 7L8 2.500L13.500 7V16H10V10.500H6V16H2.500Z" />
  </svg>
);

const TuneIcon = () => (
  <svg width="14" height="14" viewBox="0 0 14 14" fill="none" stroke="#333" strokeWidth="1.600">
    <circle cx="3" cy="3.500" r="1.700" />
    <path d="M7.500 3.500H12.500M1 10.500H6" />
    <circle cx="10.500" cy="10.500" r="1.700" />
  </svg>
);

const AbpIcon = () => (
  <svg width="17" height="17" viewBox="0 0 17 17">
    <path d="M5 0H12L17 5V12L12 17H5L0 12V5Z" fill="#e51a3c" />
    <text x="8.500" y="11" fontFamily={sans} fontSize="7" fontWeight="700" fill="#fff" textAnchor="middle">
      ABP
    </text>
  </svg>
);

const PageIcon = () => (
  <svg width="16" height="18" viewBox="0 0 16 18">
    <path d="M1.500 1.500H11L14.500 5V16.500H1.500Z" fill="#e2e2e2" stroke="#909090" />
    <path d="M11 1.500V5H14.500" fill="#fff" stroke="#a8a8a8" />
    <rect x="4" y="12" width="8" height="2" fill="#a0a0a0" />
  </svg>
);

const KindleIcon = () => (
  <svg width="16" height="16" viewBox="0 0 16 16">
    <rect width="16" height="16" fill="#1d6c94" />
    <circle cx="9" cy="7" r="6" fill="#5cb0d4" />
    <path
      d="M0 16V14.500H2.500L4.500 12L3.500 10L5 6L5 3.500Q6 1.500 7.500 2.500Q8.800 3.600 7.600 5L8.500 7.500L10.500 8L12 5.500L12.800 6L11.500 9.500H8L7.500 10.500L10.500 11L12 14.500H16V16Z"
      fill="#05080b"
    />
  </svg>
);

const PuzzleIcon = () => (
  <svg width="18" height="18" viewBox="0 0 18 18" fill="none" stroke="currentColor" strokeWidth="1.800">
    <path d="M2.500 4H13.500V16H2.500V12.500Q5 12 5 10Q5 8 2.500 7.500Z" strokeLinejoin="round" />
    <path d="M6 3.500Q6 1 8 1Q10 1 10 3.500ZM14 8Q16.500 8 16.500 10Q16.500 12 14 12Z" fill="currentColor" stroke="none" />
  </svg>
);

const DownloadIcon = () => (
  <svg width="18" height="18" viewBox="0 0 18 18" fill="none" stroke="currentColor" strokeWidth="2">
    <path d="M9 1V11M4.500 7L9 11.500L13.500 7M2 12V16H16V12" />
  </svg>
);

const Avatar = () => (
  <svg width="20" height="20" viewBox="0 0 20 20">
    <defs>
      <clipPath id="avatar">
        <circle cx="10" cy="10" r="10" />
      </clipPath>
    </defs>
    <g clipPath="url(#avatar)">
      <rect width="20" height="20" fill="#4c5c34" />
      <path d="M2 20Q3 13 10 13Q17 13 18 20Z" fill="#241a18" />
      <ellipse cx="10" cy="8" rx="4" ry="5.500" fill="#d0a48c" />
      <path d="M6 6Q6 2 10 2Q14 2 14 6Q10 3.500 6 6Z" fill="#8a7464" />
      <path d="M7 11Q10 14 13 11Q10 12 7 11Z" fill="#6a4434" />
      <path d="M7 7H13" stroke="#4a3830" strokeWidth=".8" />
    </g>
  </svg>
);

const DriveIcon = () => (
  <svg width="23" height="20" viewBox="0 0 23 20">
    <path d="M7.500 0L11.500 6.800L4 19.500L0 13Z" fill="#1ea362" />
    <path d="M7.500 0H15.200L11.500 6.800Z" fill="#11803c" />
    <path d="M15.200 0L22.800 13H15L7.500 0Z" fill="#ffcf3f" />
    <path d="M7.500 0H15.200L11.500 6.800Z" fill="#11803c" />
    <path d="M7.700 13H22.800L19 19.500H4Z" fill="#4688f4" />
    <path d="M15.200 13H22.800L19 19.500Z" fill="#ea4335" />
    <path d="M0 13H7.700L4 19.500Z" fill="#2a63c8" />
    <path d="M11.500 6.800L15 13H7.700Z" fill="#212529" />
  </svg>
);

const IgvLogo = () => (
  <svg width="32" height="32" viewBox="0 0 32 32">
    <rect width="32" height="32" rx="4" fill="#6c9ab2" />
    <path d="M7 3H32V7H7L4 5Z" fill="#fff" />
    <path d="M17 9H32V13H17L14 11Z" fill="#fff" />
    <path d="M10 3V7M27 9V13" stroke="#e46a40" />
    <path d="M14 3V7M22 9V13" stroke="#e8c020" strokeWidth="2" />
    <path d="M18 3V7" stroke="#50b060" />
    <path d="M20 9V13M25 3V7" stroke="#d84030" />
    <text x="16" y="26" fontFamily={ui} fontSize="18" fill="#fff" textAnchor="middle">
      igv
    </text>
  </svg>
);

const BroadMark = () => (
  <svg width="22" height="24" viewBox="0 0 22 24">
    <rect width="22" height="24" fill="#0b6fae" />
    <path
      d="M0 5Q9 7 22 22M0 10Q12 11 22 3M0 16Q10 15 22 9M4 0Q9 12 22 15M2 24Q9 12 22 6M10 24Q14 17 22 14M0 20Q10 20 22 19"
      fill="none"
      stroke="#fff"
      strokeWidth=".9"
    />
  </svg>
);

/* ------------------------------------------------------------------ */

const menus: [string, boolean][] = [
  ['Genome', true],
  ['Tracks', true],
  ['Sample Info', true],
  ['Session', true],
  ['Share', false],
  ['Bookmark', false],
  ['Save Image', false],
  ['Tools', true],
  ['Circular View', true],
  ['Help', true],
];

export default function App() {
  return (
    <Page>
      <GlobalStyle />
      <TabStrip>
        <ActiveTabEdge />
      </TabStrip>
      <BrowserBar>
        <IconButton aria-label="Back">
          <MdArrowBack size={18} />
        </IconButton>
        <IconButton aria-label="Forward" $muted>
          <MdArrowForward size={18} />
        </IconButton>
        <IconButton aria-label="Reload">
          <MdRefresh size={19} />
        </IconButton>
        <IconButton aria-label="Home">
          <HomeIcon />
        </IconButton>
        <AddressPill>
          <SiteInfo aria-label="Site information">
            <TuneIcon />
          </SiteInfo>
          <AddressInput aria-label="Address" defaultValue="igv.org/app/" />
          <IconButton aria-label="Bookmark this page">
            <MdStarBorder size={19} />
          </IconButton>
        </AddressPill>
        <Extensions>
          <IconButton aria-label="Adblock">
            <AbpIcon />
          </IconButton>
          <IconButton aria-label="Page">
            <PageIcon />
          </IconButton>
          <IconButton aria-label="Reader">
            <KindleIcon />
          </IconButton>
          <IconButton aria-label="Extensions">
            <PuzzleIcon />
          </IconButton>
          <Divider />
          <IconButton aria-label="Downloads">
            <DownloadIcon />
          </IconButton>
          <IconButton aria-label="Profile">
            <Avatar />
          </IconButton>
          <IconButton aria-label="Menu">
            <MdMoreVert size={20} />
          </IconButton>
        </Extensions>
      </BrowserBar>

      <NavBar>
        {menus.map(([name, menu]) => (
          <NavItem key={name} $menu={menu}>
            {name}
          </NavItem>
        ))}
        <DriveLink href="#drive" aria-label="Google Drive">
          <DriveIcon />
        </DriveLink>
      </NavBar>

      <Browser>
        <Toolbar>
          <Wordmark>IGV</Wordmark>
          <GenomeName>GCA_0000...c.fna.gz</GenomeName>
          <LocusInput aria-label="Locus" defaultValue="AE013598.1:925,483-935,053" />
          <SearchButton aria-label="Search">
            <FaSearch size={16} />
          </SearchButton>
          <span>9,571 bp</span>
          <ToolbarRight>
            <Toggle>Select Tracks</Toggle>
            <Toggle>Crosshairs</Toggle>
            <Toggle>Center Line</Toggle>
            <Toggle $on>Track Labels</Toggle>
            <Zoom>
              <ZoomButton aria-label="Zoom out">
                <FaMinusCircle size={20} />
              </ZoomButton>
              <ZoomSlider type="range" aria-label="Zoom" min={0} max={100} defaultValue={53} />
              <ZoomButton aria-label="Zoom in">
                <FaPlusCircle size={20} />
              </ZoomButton>
            </Zoom>
          </ToolbarRight>
        </Toolbar>

        <Row $h={16}>
          <div />
          <Ideogram>
            <IdeogramMark />
          </Ideogram>
        </Row>
        <Row $h={50}>
          <div />
          <Viewport>
            <Ruler />
          </Viewport>
        </Row>

        <Track height={25} gap={5}>
          <SequenceStrip />
        </Track>
        <Track height={70} gap={5} label="GCA_000007385.1_ASM738v1_genomic.gff.gz" thumb={[13, 33]}>
          <GeneTrack />
        </Track>
        <Track height={300} gap={5} label="treatment.bam" max={510} thumb={[0, 14]}>
          <Canvas>
            <Coverage islands={treatmentCoverage} base={50} />
            <Alignments tiles={treatmentTiles} top={55} />
          </Canvas>
        </Track>
        <Track height={300} label="control.bam" max={57} thumb={[0, 17]}>
          <Canvas>
            <Coverage islands={controlCoverage} base={50} />
            <Alignments tiles={controlTiles} top={55} />
          </Canvas>
        </Track>
      </Browser>

      <Footer>
        <FooterLink href="https://igv.org">
          <IgvLogo />
          igv.org
        </FooterLink>
        <Sponsors>
          <UcsdLogo href="#ucsd">UC San Diego</UcsdLogo>
          <BroadLogo href="#broad">
            <BroadMark />
            <BroadWords>
              BROAD
              <BroadSub>INSTITUTE</BroadSub>
            </BroadWords>
          </BroadLogo>
        </Sponsors>
      </Footer>
      <Marker />
    </Page>
  );
}
